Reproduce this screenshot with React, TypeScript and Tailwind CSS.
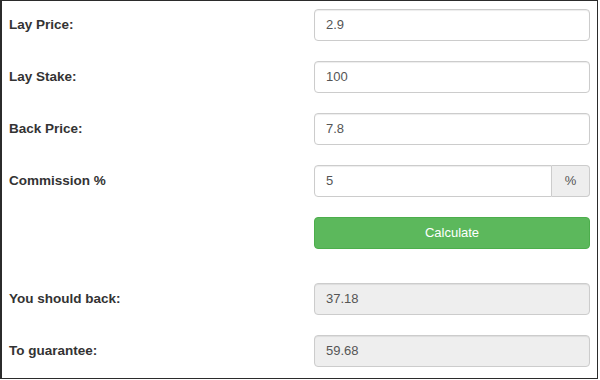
const font = { fontFamily: '"Liberation Sans", Arial, sans-serif' };

function Row({ label, children }: { label?: string; children: React.ReactNode }) {
  return (
    <div className="flex items-center h-[32px]">
      <div className="flex-1 text-[13.5px] font-bold text-[#333]">{label}</div>
      <div className="w-[276px] h-full">{children}</div>
    </div>
  );
}

function Field({ value, readOnly }: { value: string; readOnly?: boolean }) {
  return (
    <div
      className={`h-full flex items-center px-[11px] border border-[#ccc] rounded-[4px] text-[13px] text-[#555] shadow-[inset_0_1px_1px_rgba(0,0,0,0.075)] ${
        readOnly ? 'bg-[#eee]' : 'bg-white'
      }`}
    >
      {value}
    </div>
  );
}

export default function App() {
  return (
    <div
      style={font}
      className="w-[598px] h-[379px] bg-white border border-l-2 border-[#2b2b2b] pt-[8px] pl-[7px] pr-[7px] flex flex-col gap-[20px]"
    >
      <Row label="Lay Price:">
        <Field value="2.9" />
      </Row>
      <Row label="Lay Stake:">
        <Field value="100" />
      </Row>
      <Row label="Back Price:">
        <Field value="7.8" />
      </Row>
      <Row label="Commission %">
        <div className="flex h-full">
          <div className="flex-1 flex items-center px-[11px] border border-[#ccc] rounded-l-[4px] text-[13px] text-[#555] bg-white shadow-[inset_0_1px_1px_rgba(0,0,0,0.075)]">
            5
          </div>
          <div className="w-[38px] flex items-center justify-center border border-l-0 border-[#ccc] rounded-r-[4px] bg-[#eee] text-[13px] text-[#555]">
            %
          </div>
        </div>
      </Row>
      <Row>
        <button className="w-full h-full rounded-[4px] bg-[#5cb85c] border border-[#4cae4c] text-white text-[13px]">
          Calculate
        </button>
      </Row>
      <div className="mt-[14px] flex flex-col gap-[20px]">
        <Row label="You should back:">
          <Field value="37.18" readOnly />
        </Row>
        <Row label="To guarantee:">
          <Field value="59.68" readOnly />
        </Row>
      </div>
    </div>
  );
}
